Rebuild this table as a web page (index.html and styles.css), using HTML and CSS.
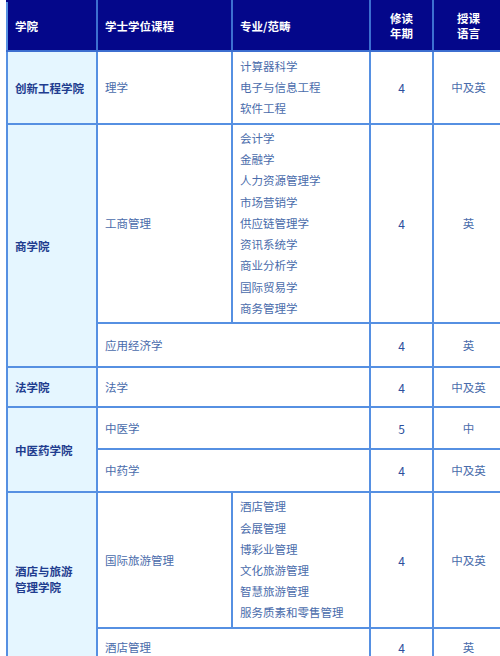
FILE: index.html
```html
<!DOCTYPE html>
<html lang="zh-CN">
<head>
<meta charset="utf-8">
<link rel="stylesheet" href="styles.css">
</head>
<body>
<div class="wrap">
<table class="prog">
  <colgroup>
    <col class="c1"><col class="c2"><col class="c3"><col class="c4"><col class="c5">
  </colgroup>
  <thead>
    <tr class="h-head">
      <th>学院</th>
      <th>学士学位课程</th>
      <th>专业/范畴</th>
      <th class="ctr">修读<br>年期</th>
      <th class="ctr">授课<br>语言</th>
    </tr>
  </thead>
  <tbody>
    <tr class="h73">
      <td class="college">创新工程学院</td>
      <td>理学</td>
      <td class="list">计算器科学<br>电子与信息工程<br>软件工程</td>
      <td class="num">4</td>
      <td class="lang">中及英</td>
    </tr>
    <tr class="h199">
      <td class="college" rowspan="2">商学院</td>
      <td>工商管理</td>
      <td class="list">会计学<br>金融学<br>人力资源管理学<br>市场营销学<br>供应链管理学<br>资讯系统学<br>商业分析学<br>国际贸易学<br>商务管理学</td>
      <td class="num">4</td>
      <td class="lang">英</td>
    </tr>
    <tr class="h44">
      <td colspan="2">应用经济学</td>
      <td class="num">4</td>
      <td class="lang">英</td>
    </tr>
    <tr class="h40">
      <td class="college">法学院</td>
      <td colspan="2">法学</td>
      <td class="num">4</td>
      <td class="lang">中及英</td>
    </tr>
    <tr class="h42">
      <td class="college" rowspan="2">中医药学院</td>
      <td colspan="2">中医学</td>
      <td class="num">5</td>
      <td class="lang">中</td>
    </tr>
    <tr class="h43">
      <td colspan="2">中药学</td>
      <td class="num">4</td>
      <td class="lang">中及英</td>
    </tr>
    <tr class="h136">
      <td class="college" rowspan="2">酒店与旅游<br>管理学院</td>
      <td>国际旅游管理</td>
      <td class="list">酒店管理<br>会展管理<br>博彩业管理<br>文化旅游管理<br>智慧旅游管理<br>服务质素和零售管理</td>
      <td class="num">4</td>
      <td class="lang">中及英</td>
    </tr>
    <tr class="h38">
      <td colspan="2">酒店管理</td>
      <td class="num">4</td>
      <td class="lang">英</td>
    </tr>
  </tbody>
</table>
</div>
</body>
</html>
```

FILE: styles.css
```css
html, body {
  margin: 0;
  padding: 0;
  background: #ffffff;
  overflow: hidden;
}
body {
  font-family: "Noto Sans CJK SC", "Noto Sans", sans-serif;
  font-size: 11.5px;
  color: #4a6cab;
}
.wrap {
  padding-left: 6px;
  width: 520px;
}
.prog {
  border-collapse: collapse;
  table-layout: fixed;
  width: 497px;
}
.c1 { width: 90px; }
.c2 { width: 135px; }
.c3 { width: 138px; }
.c4 { width: 63px; }
.c5 { width: 71px; }

.prog th, .prog td {
  border: 2px solid #5690e2;
  padding: 0 7px;
  vertical-align: middle;
  text-align: left;
  line-height: 21px;
}
.prog th {
  background: #04078a;
  color: #ffffff;
  font-weight: 700;
  line-height: 15px;
  border-color: #04078a #3d6fd0 #3d6fd0 #3d6fd0;
}
.prog th:first-child { border-left-color: #5690e2; }
.prog th.ctr { text-align: center; }
.h-head { height: 50px; }
.h73 { height: 73px; }
.h199 { height: 199px; }
.h44 { height: 44px; }
.h40 { height: 40px; }
.h42 { height: 42px; }
.h43 { height: 43px; }
.h136 { height: 136px; }
.h38 { height: 38px; }

.prog td.college {
  background: #e5f6ff;
  color: #1f3d8f;
  font-weight: 700;
  line-height: 16px;
}
.prog td.list {
  padding-top: 2px;
  padding-bottom: 2px;
  line-height: 21.2px;
}
.prog td.num {
  text-align: center;
  color: #2d4f9c;
  font-size: 12px;
  padding: 0;
}
.prog td.lang {
  text-align: center;
  padding: 0;
}
```
